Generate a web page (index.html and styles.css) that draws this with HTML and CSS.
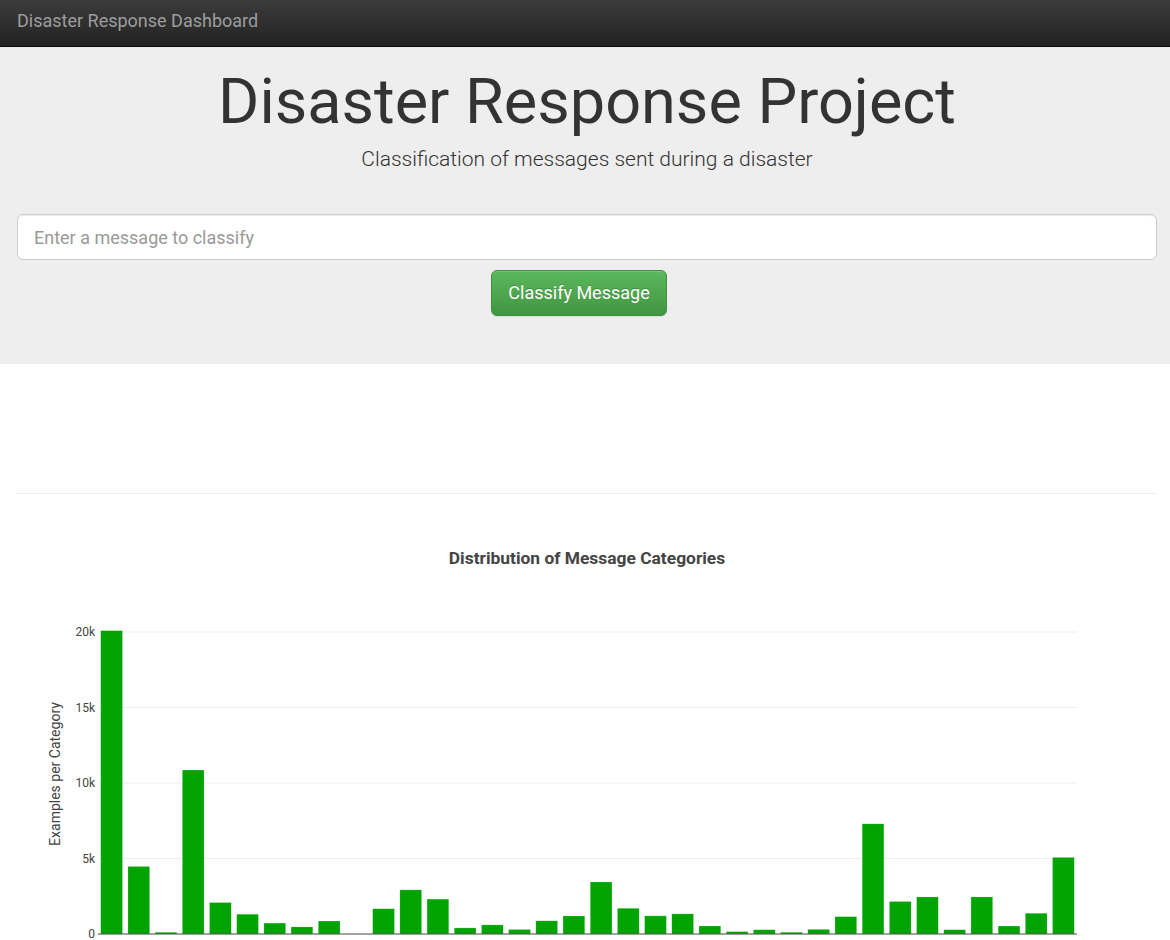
FILE: index.html
```html
<!DOCTYPE html>
<html lang="en">
<head>
<meta charset="utf-8">
<title>Disaster Response Dashboard</title>
<link rel="stylesheet" href="styles.css">
</head>
<body>
<nav class="navbar">
  <a class="brand" href="#">Disaster Response Dashboard</a>
</nav>

<div class="jumbotron">
  <h1 class="title">Disaster Response Project</h1>
  <p class="lead">Classification of messages sent during a disaster</p>
  <form class="classify-form">
    <input class="msg-input" type="text" placeholder="Enter a message to classify">
    <div class="btn-row">
      <button class="btn-success" type="button">Classify Message</button>
    </div>
  </form>
</div>

<div class="content">
  <div class="spacer"></div>
  <hr class="divider">
  <div class="chart">
    <svg class="chart-svg" width="1140" height="440" viewBox="0 0 1140 440">
      <text class="chart-title" x="570" y="55">Distribution of Message Categories</text>
      <g class="grid">
        <line x1="81" x2="1060" y1="349.5" y2="349.5"/>
        <line x1="81" x2="1060" y1="274" y2="274"/>
        <line x1="81" x2="1060" y1="198.5" y2="198.5"/>
        <line x1="81" x2="1060" y1="123" y2="123"/>
      </g>
      <g class="yticks">
        <text x="78" y="429">0</text>
        <text x="78" y="353.5">5k</text>
        <text x="78" y="278">10k</text>
        <text x="78" y="202.5">15k</text>
        <text x="78" y="127">20k</text>
      </g>
      <text class="ytitle" transform="translate(43,265) rotate(-90)">Examples per Category</text>
      <g class="bars" transform="translate(0,425) scale(1,-1)">
        <rect x="83.72" y="0" width="21.76" height="303.40"/>
        <rect x="110.91" y="0" width="21.76" height="67.56"/>
        <rect x="138.11" y="0" width="21.76" height="1.78"/>
        <rect x="165.30" y="0" width="21.76" height="163.99"/>
        <rect x="192.50" y="0" width="21.76" height="31.47"/>
        <rect x="219.69" y="0" width="21.76" height="19.83"/>
        <rect x="246.89" y="0" width="21.76" height="10.93"/>
        <rect x="274.08" y="0" width="21.76" height="7.11"/>
        <rect x="301.28" y="0" width="21.76" height="12.99"/>
        <rect x="328.47" y="0" width="21.76" height="0"/>
        <rect x="355.66" y="0" width="21.76" height="25.25"/>
        <rect x="382.86" y="0" width="21.76" height="44.14"/>
        <rect x="410.05" y="0" width="21.76" height="34.94"/>
        <rect x="437.25" y="0" width="21.76" height="6.10"/>
        <rect x="464.44" y="0" width="21.76" height="9.12"/>
        <rect x="491.64" y="0" width="21.76" height="4.50"/>
        <rect x="518.83" y="0" width="21.76" height="13.21"/>
        <rect x="546.03" y="0" width="21.76" height="18.03"/>
        <rect x="573.22" y="0" width="21.76" height="52.03"/>
        <rect x="600.41" y="0" width="21.76" height="25.75"/>
        <rect x="627.61" y="0" width="21.76" height="18.14"/>
        <rect x="654.80" y="0" width="21.76" height="20.13"/>
        <rect x="682.00" y="0" width="21.76" height="8.03"/>
        <rect x="709.19" y="0" width="21.76" height="2.40"/>
        <rect x="736.39" y="0" width="21.76" height="4.27"/>
        <rect x="763.58" y="0" width="21.76" height="1.81"/>
        <rect x="790.78" y="0" width="21.76" height="4.67"/>
        <rect x="817.97" y="0" width="21.76" height="17.38"/>
        <rect x="845.16" y="0" width="21.76" height="110.18"/>
        <rect x="872.36" y="0" width="21.76" height="32.54"/>
        <rect x="899.55" y="0" width="21.76" height="37.07"/>
        <rect x="926.75" y="0" width="21.76" height="4.26"/>
        <rect x="953.94" y="0" width="21.76" height="37.07"/>
        <rect x="981.14" y="0" width="21.76" height="8.00"/>
        <rect x="1008.33" y="0" width="21.76" height="20.78"/>
        <rect x="1035.53" y="0" width="21.76" height="76.63"/>
      </g>
      <line class="zeroline" x1="81" x2="1060" y1="425" y2="425"/>
    </svg>
  </div>
</div>
</body>
</html>
```

FILE: styles.css
```css
* {
  box-sizing: border-box;
}

html, body {
  margin: 0;
  padding: 0;
}

body {
  font-family: Roboto, "Liberation Sans", sans-serif;
  color: #333;
  background: #fff;
}

.navbar {
  height: 47px;
  display: flex;
  align-items: center;
  padding-left: 17px;
  background: linear-gradient(to bottom, #3c3c3c 0%, #222 100%);
  border-bottom: 1px solid #080808;
}

.brand {
  font-size: 18px;
  color: #9d9d9d;
  text-decoration: none;
  line-height: 20px;
  margin-top: -4px;
}

.jumbotron {
  background: #eee;
  padding: 15px 13px 48px 17px;
  text-align: center;
}

.title {
  margin: 0;
  font-size: 63px;
  font-weight: 400;
  line-height: 80px;
  color: #333;
}

.lead {
  margin: 2px 0 0;
  font-size: 21px;
  font-weight: 300;
  line-height: 30px;
  color: #333;
}

.classify-form {
  margin-top: 40px;
}

.msg-input {
  display: block;
  width: 100%;
  height: 46px;
  padding: 10px 16px;
  font-family: inherit;
  font-size: 18px;
  color: #555;
  background: #fff;
  border: 1px solid #ccc;
  border-radius: 6px;
  box-shadow: inset 0 1px 1px rgba(0,0,0,0.075);
  outline: none;
}

.msg-input::placeholder {
  color: #999;
}

.btn-row {
  display: flex;
  justify-content: center;
  margin-top: 10px;
}

.btn-success {
  height: 46px;
  padding: 10px 16px;
  margin-right: 16px;
  font-family: inherit;
  font-size: 18px;
  line-height: 24px;
  color: #fff;
  background: linear-gradient(to bottom, #5cb85c 0%, #419641 100%);
  border: 1px solid #3e8f3e;
  border-radius: 6px;
  text-shadow: 0 -1px 0 rgba(0,0,0,0.2);
  box-shadow: inset 0 1px 0 rgba(255,255,255,0.15), 0 1px 1px rgba(0,0,0,0.075);
  cursor: pointer;
}

.content {
  padding: 0 13px 0 17px;
}

.spacer {
  height: 129px;
}

.divider {
  margin: 0;
  border: 0;
  border-top: 1px solid #eee;
}

.chart {
  margin-top: 15px;
  height: 440px;
  overflow: hidden;
}

.chart-svg {
  display: block;
  font-family: Roboto, "Liberation Sans", sans-serif;
}

.chart-title {
  font-size: 17.4px;
  font-weight: 700;
  fill: #444;
  text-anchor: middle;
}

.grid line {
  stroke: #eee;
  stroke-width: 1;
}

.yticks text {
  font-size: 12px;
  fill: #444;
  text-anchor: end;
}

.ytitle {
  font-size: 14px;
  fill: #444;
  text-anchor: middle;
}

.bars rect {
  fill: #00a400;
  stroke: rgba(255,255,255,0.45);
  stroke-width: 0.5;
}

.zeroline {
  stroke: #444;
  stroke-width: 1;
}
```
